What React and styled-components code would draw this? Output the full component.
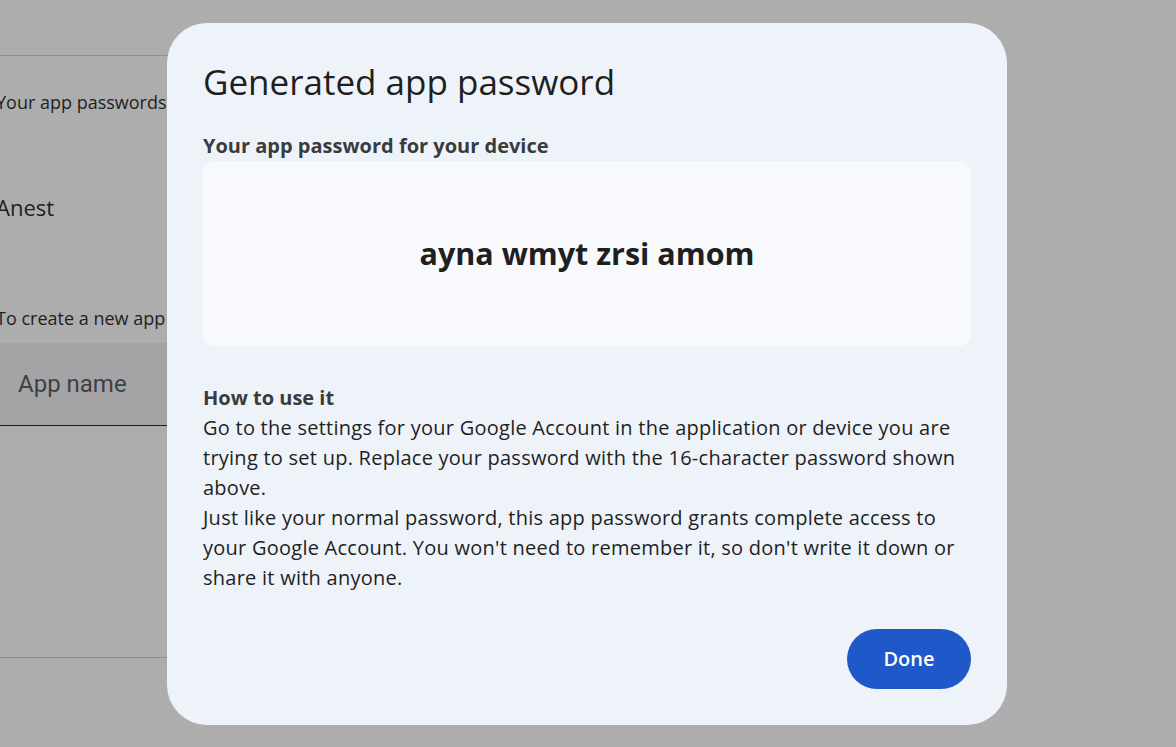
import React from "react";
import styled, { createGlobalStyle } from "styled-components";

const GlobalStyle = createGlobalStyle`
  html, body {
    margin: 0;
    padding: 0;
    height: 100%;
    background: #adadad;
    overflow: hidden;
  }
  #root {
    height: 100%;
  }
`;

const Screen = styled.div`
  position: relative;
  width: 100vw;
  height: 100vh;
  background: #adadad;
  font-family: "Open Sans", Roboto, sans-serif;
  overflow: hidden;
`;

// page that sits behind the scrim, partly hidden by the dialog
const BackPage = styled.div`
  display: flex;
  flex-direction: column;
  margin-left: -4px;
  padding-top: 55px;
  width: 700px;
`;

const Divider = styled.div`
  height: 1px;
  background: #8e8e8e;
  margin-left: 4px;
`;

const BackText = styled.div`
  font-size: ${(p) => p.size || 18}px;
  color: #1f1f1f;
  line-height: 1.3;
  margin-top: ${(p) => p.top || 0}px;
  white-space: nowrap;
`;

const Field = styled.div`
  margin-top: 13px;
  margin-left: 4px;
  height: 82px;
  background: #a4a4a6;
  border-bottom: 1px solid #121a2b;
  display: flex;
  align-items: center;
  padding-left: 18px;
  font-family: Roboto, sans-serif;
  font-size: 24px;
  color: #3f4043;
`;

const Section = styled.div`
  margin-left: 4px;
  height: 231px;
  border-bottom: 1px solid #8e8e8e;
`;

const Backdrop = styled.div`
  position: fixed;
  inset: 0;
  padding-right: 2px;
  display: flex;
  align-items: center;
  justify-content: center;
`;

const Dialog = styled.div`
  width: 840px;
  height: 702px;
  box-sizing: border-box;
  background: #eef3fa;
  border-radius: 40px;
  padding: 36px 36px 36px;
  display: flex;
  flex-direction: column;
`;

const Title = styled.h1`
  margin: 0;
  font-family: "Open Sans", sans-serif;
  font-weight: 400;
  font-size: 35px;
  line-height: 46px;
  color: #1f1f1f;
`;

const Label = styled.div`
  margin-top: ${(p) => p.top || 0}px;
  font-size: 20px;
  font-weight: 700;
  line-height: 26px;
  color: #3a3b3c;
`;

const PasswordBox = styled.div`
  margin-top: 2px;
  height: 185px;
  background: #f7f9fd;
  border-radius: 12px;
  display: flex;
  align-items: center;
  justify-content: center;
  font-size: 30.5px;
  font-weight: 700;
  color: #1f1f1f;
`;

const Body = styled.p`
  margin: 2px 0 0;
  font-size: 20px;
  line-height: 30px;
  color: #1f1f1f;
  letter-spacing: 0.25px;
`;

const Actions = styled.div`
  margin-top: auto;
  display: flex;
  justify-content: flex-end;
`;

const DoneButton = styled.button`
  width: 124px;
  height: 60px;
  border: none;
  border-radius: 30px;
  background: #1f58c9;
  color: #fff;
  font-family: "Open Sans", sans-serif;
  font-size: 20px;
  font-weight: 600;
  cursor: pointer;
`;

export default function App() {
  return (
    <Screen>
      <GlobalStyle />
      <BackPage>
        <Divider />
        <BackText top={35}>Your app passwords let you sign in</BackText>
        <BackText size={22} top={79}>Anest</BackText>
        <BackText top={85}>To create a new app specific password</BackText>
        <Field>App name</Field>
        <Section />
      </BackPage>
      <Backdrop>
        <Dialog>
          <Title>Generated app password</Title>
          <Label top={28}>Your app password for your device</Label>
          <PasswordBox>ayna wmyt zrsi amom</PasswordBox>
          <Label top={39}>How to use it</Label>
          <Body>
            Go to the settings for your Google Account in the application or device you are
            trying to set up. Replace your password with the 16-character password shown
            above.
            <br />
            Just like your normal password, this app password grants complete access to
            your Google Account. You won't need to remember it, so don't write it down or
            share it with anyone.
          </Body>
          <Actions>
            <DoneButton>Done</DoneButton>
          </Actions>
        </Dialog>
      </Backdrop>
    </Screen>
  );
}
